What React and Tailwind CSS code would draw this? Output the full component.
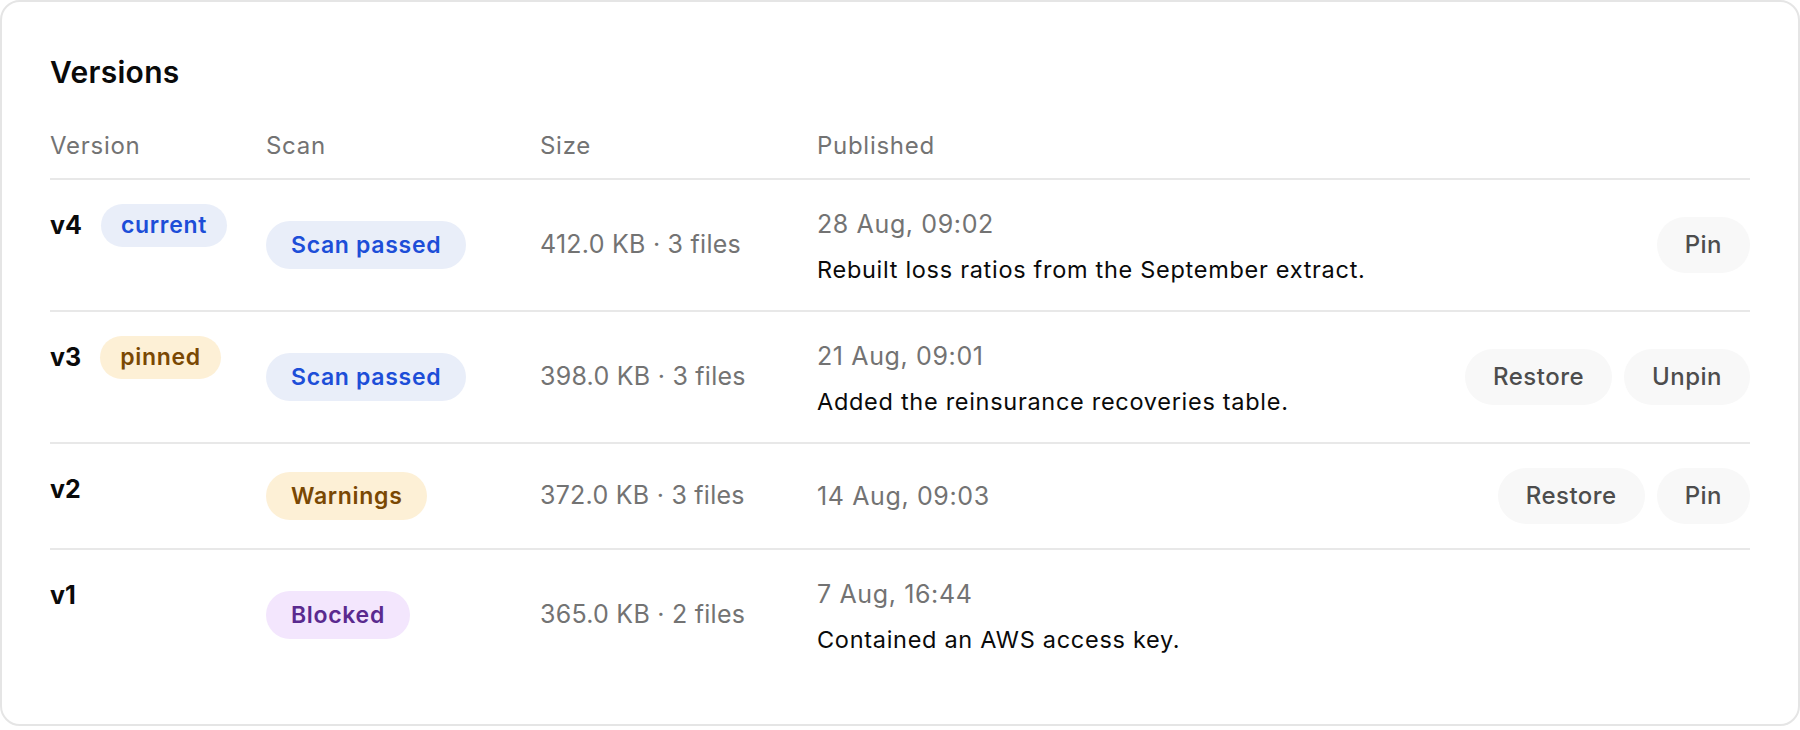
import React from "react";

const versions = [
  {
    id: "v4",
    badge: { label: "current", tone: "blue" },
    scan: { label: "Scan passed", tone: "blue" },
    size: "412.0 KB · 3 files",
    date: "28 Aug, 09:02",
    note: "Rebuilt loss ratios from the September extract.",
    actions: ["Pin"],
  },
  {
    id: "v3",
    badge: { label: "pinned", tone: "amber" },
    scan: { label: "Scan passed", tone: "blue" },
    size: "398.0 KB · 3 files",
    date: "21 Aug, 09:01",
    note: "Added the reinsurance recoveries table.",
    actions: ["Restore", "Unpin"],
  },
  {
    id: "v2",
    scan: { label: "Warnings", tone: "amber" },
    size: "372.0 KB · 3 files",
    date: "14 Aug, 09:03",
    actions: ["Restore", "Pin"],
  },
  {
    id: "v1",
    scan: { label: "Blocked", tone: "purple" },
    size: "365.0 KB · 2 files",
    date: "7 Aug, 16:44",
    note: "Contained an AWS access key.",
    actions: [],
  },
];

const tones = {
  blue: "bg-[#e9eef9] text-[#1d4ed8]",
  amber: "bg-[#fdf0d6] text-[#7a4803]",
  purple: "bg-[#f3e6fd] text-[#5a2a8f]",
};

const Badge = ({ label, tone }) => (
  <span
    className={`inline-flex h-[43px] items-center rounded-full px-[20px] text-[23px] font-semibold tracking-[0.03em] ${tones[tone]}`}
  >
    {label}
  </span>
);

const ScanPill = ({ label, tone }) => (
  <span
    className={`inline-flex h-[48px] items-center gap-[6px] rounded-full px-[25px] text-[23px] font-semibold tracking-[0.03em] ${tones[tone]}`}
  >
    {label}
  </span>
);

const VersionRow = ({ v, last }) => (
  <div
    className={`grid grid-cols-[216px_274px_277px_1fr_auto] items-center py-[24px] ${
      last ? "" : "border-b-2 border-[#e8e8e8]"
    }`}
  >
    <div className="flex h-[43px] items-center gap-[19px] self-start">
      <span className="text-[25px] font-bold text-[#0a0a0a]">{v.id}</span>
      {v.badge && <Badge {...v.badge} />}
    </div>
    <div>
      <ScanPill {...v.scan} />
    </div>
    <div className="text-[25px] tracking-[0.01em] text-[#737373]">{v.size}</div>
    <div>
      <div className="text-[25px] leading-[40px] tracking-[0.025em] text-[#737373]">
        {v.date}
      </div>
      {v.note && (
        <div className="mt-[10px] text-[23.5px] leading-[32px] tracking-[0.03em] text-[#0a0a0a]">
          {v.note}
        </div>
      )}
    </div>
    <div className="flex items-center justify-end gap-[12px]">
      {v.actions.map((a) => (
        <button
          key={a}
          className="h-[56px] cursor-pointer rounded-full bg-[#f8f8f8] px-[28px] text-[24px] font-medium tracking-[0.02em] text-[#4d4d4d]"
        >
          {a}
        </button>
      ))}
    </div>
  </div>
);

export default function App() {
  return (
    <div
      className="bg-white"
      style={{ fontFamily: "Inter, 'Noto Sans', sans-serif" }}
    >
      <div className="rounded-[20px] border-2 border-[#e5e5e5] px-[48px] pt-[52px] pb-[44px]">
        <h2 className="text-[30px] font-semibold leading-[36px] tracking-[0.01em] text-[#0a0a0a]">
          Versions
        </h2>
        <div className="mt-[40px] grid grid-cols-[216px_274px_277px_1fr] border-b-2 border-[#e8e8e8] pb-[16px] text-[24px] leading-[32px] tracking-[0.03em] text-[#737373]">
          <div>Version</div>
          <div>Scan</div>
          <div>Size</div>
          <div>Published</div>
        </div>
        {versions.map((v, i) => (
          <VersionRow key={v.id} v={v} last={i === versions.length - 1} />
        ))}
      </div>
    </div>
  );
}
